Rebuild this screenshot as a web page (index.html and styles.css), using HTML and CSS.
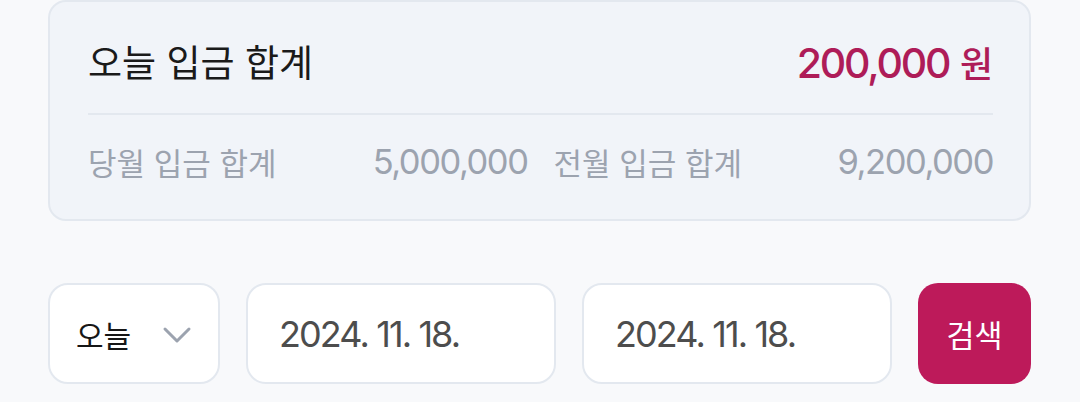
FILE: index.html
```html
<!DOCTYPE html>
<html lang="ko">
<head>
<meta charset="utf-8">
<title>입금 합계</title>
<link rel="stylesheet" href="styles.css">
</head>
<body>
<main class="page">
  <section class="summary">
    <div class="summary-head">
      <span class="summary-title">오늘 입금 합계</span>
      <span class="summary-amount"><span class="num">200,000</span> <span class="unit">원</span></span>
    </div>
    <div class="summary-sub">
      <div class="sub-item">
        <span class="sub-label">당월 입금 합계</span>
        <span class="sub-value">5,000,000</span>
      </div>
      <div class="sub-item">
        <span class="sub-label">전월 입금 합계</span>
        <span class="sub-value">9,200,000</span>
      </div>
    </div>
  </section>

  <section class="filters">
    <div class="select">
      <span class="select-text">오늘</span>
      <svg class="chevron" width="30" height="18" viewBox="0 0 30 18" aria-hidden="true">
        <path d="M3 3 L15 15 L27 3" fill="none" stroke="#9ca3af" stroke-width="3" stroke-linecap="round" stroke-linejoin="round"/>
      </svg>
    </div>
    <div class="date-field">2024. 11. 18.</div>
    <div class="date-field">2024. 11. 18.</div>
    <button class="search-btn" type="button">검색</button>
  </section>
</main>
</body>
</html>
```

FILE: styles.css
```css
* {
  box-sizing: border-box;
}

html, body {
  margin: 0;
  padding: 0;
}

body {
  background: #f8f9fb;
  font-family: "Inter", "Noto Sans CJK KR", sans-serif;
  width: 1080px;
  height: 402px;
  overflow: hidden;
}

.page {
  padding: 0 49px 0 48px;
}

.summary {
  background: #f1f4f9;
  border: 2px solid #e3e8ef;
  border-radius: 18px;
  padding: 0 36px 0 38px;
  height: 221px;
  display: flex;
  flex-direction: column;
}

.summary-head {
  display: flex;
  justify-content: space-between;
  align-items: center;
  height: 113px;
  padding-top: 12px;
  border-bottom: 2px solid #e3e8ef;
}

.summary-title {
  font-size: 37px;
  color: #1a1a1a;
  line-height: 1;
}

.summary-amount {
  color: #ae1c58;
  font-size: 38px;
  line-height: 1;
  white-space: nowrap;
}

.summary-amount .num {
  font-size: 41px;
  font-weight: 500;
  letter-spacing: -2.2px;
}

.summary-amount .unit {
  font-size: 36px;
  font-weight: 500;
}

.summary-sub {
  display: flex;
  gap: 26px;
  flex: 1;
  align-items: center;
  padding-bottom: 12px;
}

.sub-item {
  flex: 1;
  display: flex;
  justify-content: space-between;
  align-items: center;
  color: #9ca3af;
}

.sub-label {
  font-size: 31px;
}

.sub-value {
  font-size: 34.5px;
  letter-spacing: -1.45px;
}

.filters {
  display: flex;
  gap: 26px;
  margin-top: 62px;
  height: 101px;
}

.select,
.date-field {
  background: #ffffff;
  border: 2px solid #e3e8ef;
  border-radius: 20px;
  display: flex;
  align-items: center;
}

.select {
  width: 172px;
  padding: 0 26px 0 26px;
  justify-content: space-between;
}

.select-text {
  font-size: 30px;
  color: #161616;
}

.chevron {
  margin-top: 2px;
}

.date-field {
  flex: 1;
  padding-left: 31px;
  font-size: 36px;
  color: #4d4d4d;
  letter-spacing: -1.9px;
}

.search-btn {
  width: 113px;
  border: none;
  border-radius: 20px;
  background: #bd1a5a;
  color: #ffffff;
  font-family: "Inter", "Noto Sans CJK KR", sans-serif;
  font-size: 30.5px;
  padding: 0;
  cursor: pointer;
}
```
